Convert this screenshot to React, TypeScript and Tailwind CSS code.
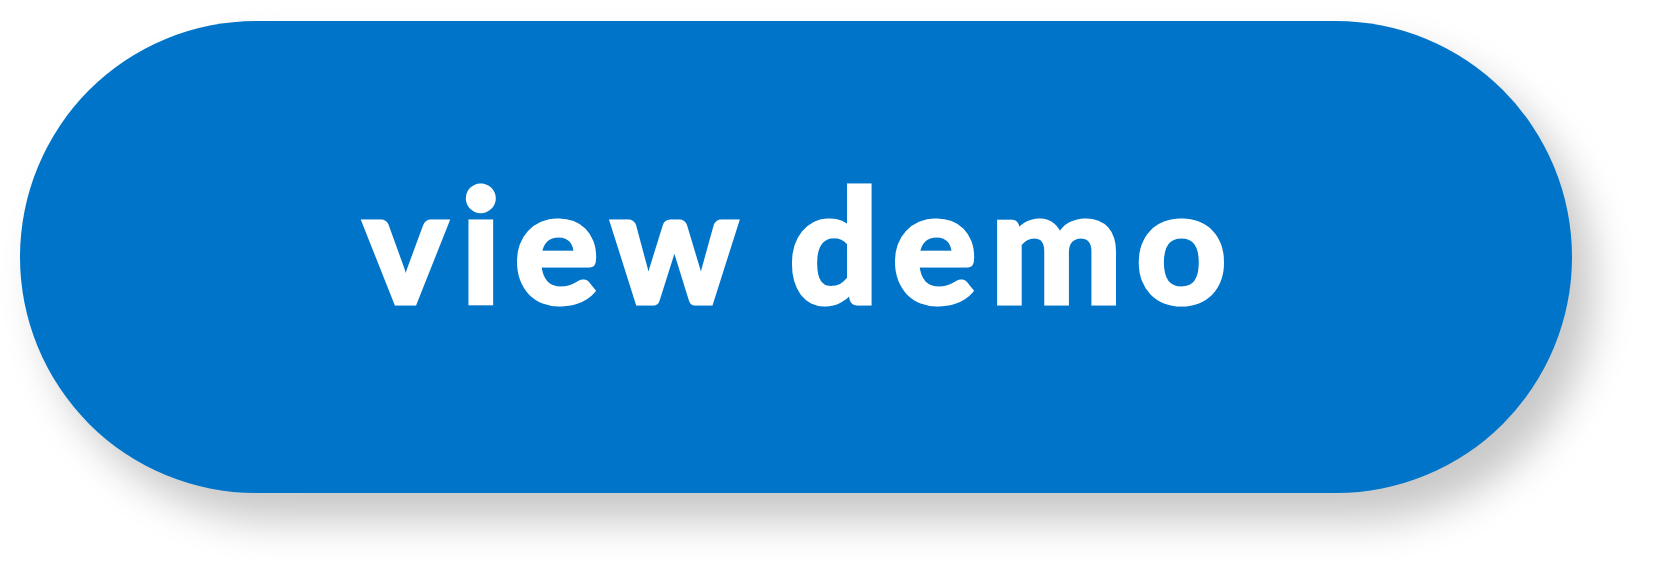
export default function App() {
  return (
    <div className="w-[1659px] h-[584px] bg-white pt-[21px] pl-[20px]">
      <button className="w-[1552px] h-[472px] rounded-full bg-[#0074c8] shadow-[22px_28px_40px_rgba(0,0,0,0.22)] flex items-center justify-center pl-[12px]">
        <span className="text-white text-[158px] font-bold leading-none tracking-[13.5px] [word-spacing:-11px] font-['Lato',sans-serif] pb-[30px] [-webkit-text-stroke:5px_white]">
          view demo
        </span>
      </button>
    </div>
  )
}
